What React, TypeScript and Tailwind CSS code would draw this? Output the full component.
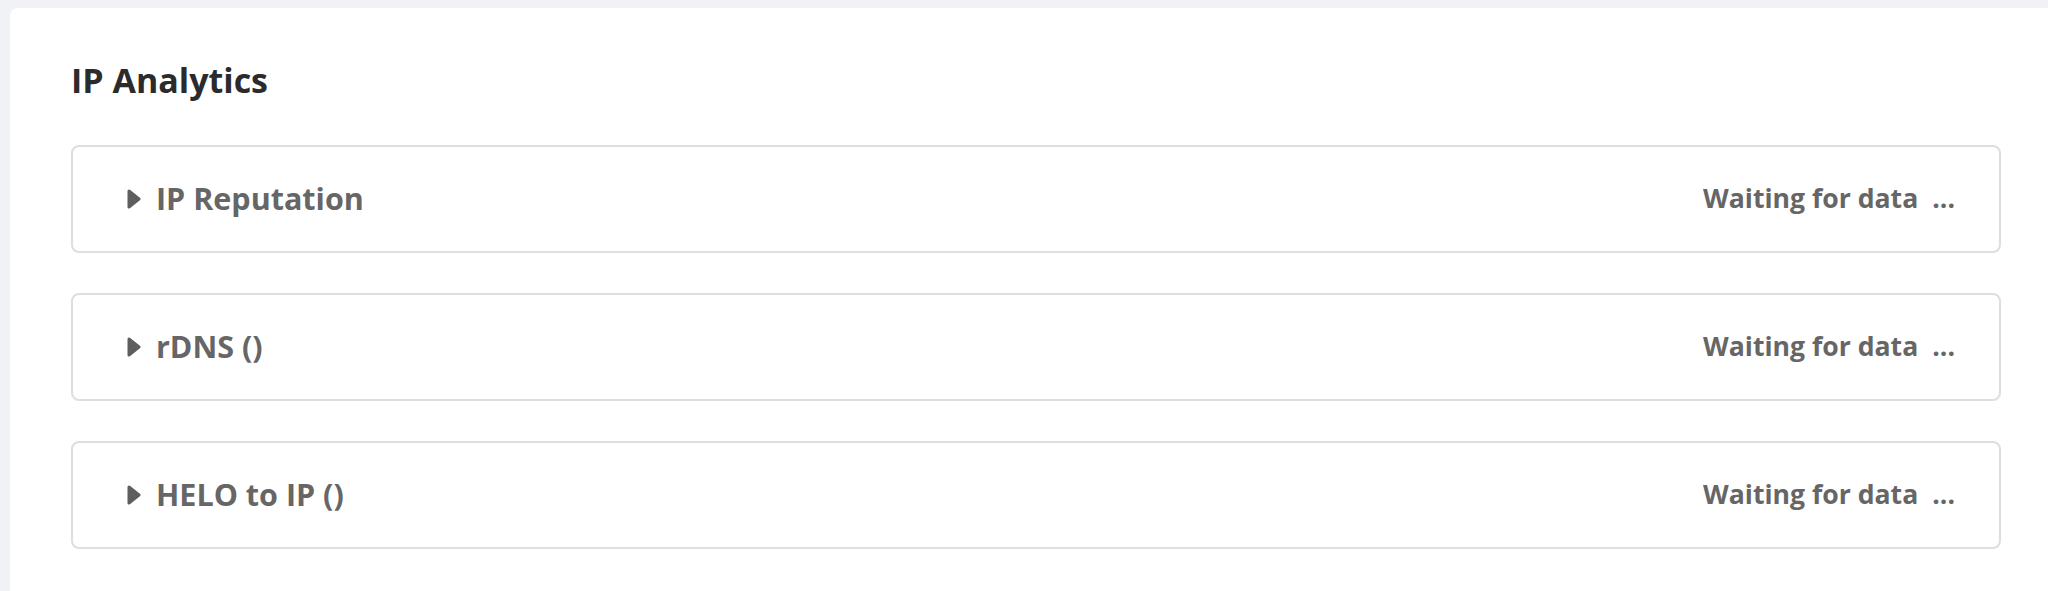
import React from "react";

const ROWS = ["IP Reputation", "rDNS ()", "HELO to IP ()"];

function Caret() {
  return (
    <svg width="14" height="20" viewBox="0 0 14 20" className="flex-shrink-0 text-[#5e5e5e]">
      <path d="M2 2 L12 10 L2 18 Z" fill="currentColor" stroke="currentColor" strokeWidth="3" strokeLinejoin="round" />
    </svg>
  );
}

function AnalyticsRow({ label }: { label: string }) {
  return (
    <div className="h-[108px] border-2 border-[#dedede] rounded-[8px] bg-white flex items-center justify-between pl-[54px] pr-[44px]">
      <div className="flex items-center gap-[15px]">
        <Caret />
        <span className="text-[30.5px] font-bold text-[#666666]">{label}</span>
      </div>
      <div className="flex items-center text-[26.6px] font-bold text-[#666666]">
        <span>Waiting for data</span>
        <span className="ml-[14px]">...</span>
      </div>
    </div>
  );
}

export default function App() {
  return (
    <div
      className="w-[2048px] h-[591px] overflow-hidden bg-[#f1f2f6] pl-[10px] pt-[8px]"
      style={{ fontFamily: '"Open Sans", "Noto Sans", sans-serif' }}
    >
      <div className="h-full bg-white rounded-tl-[8px] pl-[61px] pr-[47px] pt-[48px]">
        <h1 className="text-[34px] leading-[48px] font-bold text-[#2b2b2b]">IP Analytics</h1>
        <div className="mt-[41px] flex flex-col gap-[40px]">
          {ROWS.map((r) => (
            <AnalyticsRow key={r} label={r} />
          ))}
        </div>
      </div>
    </div>
  );
}
